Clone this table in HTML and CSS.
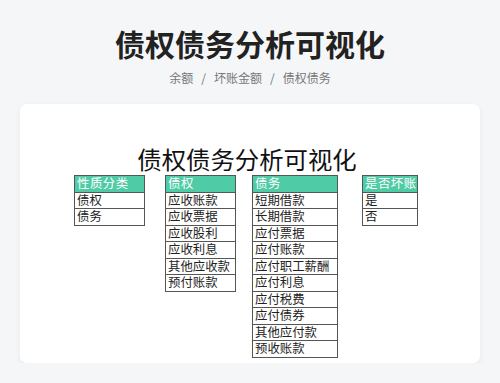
FILE: index.html
```html
<!DOCTYPE html>
<html lang="zh">
<head>
<meta charset="utf-8">
<link rel="stylesheet" href="styles.css">
</head>
<body>
<div class="page">
  <h1 class="title">债权债务分析可视化</h1>
  <div class="crumbs"><span>余额</span><span class="sep">/</span><span>坏账金额</span><span class="sep">/</span><span>债权债务</span></div>
  <div class="card">
    <div class="chart-title">债权债务分析可视化</div>
    <div class="tables">
      <table class="tbl t1">
        <tr><th>性质分类</th></tr>
        <tr><td>债权</td></tr>
        <tr><td>债务</td></tr>
      </table>
      <table class="tbl t2">
        <tr><th>债权</th></tr>
        <tr><td>应收账款</td></tr>
        <tr><td>应收票据</td></tr>
        <tr><td>应收股利</td></tr>
        <tr><td>应收利息</td></tr>
        <tr><td>其他应收款</td></tr>
        <tr><td>预付账款</td></tr>
      </table>
      <table class="tbl t3">
        <tr><th>债务</th></tr>
        <tr><td>短期借款</td></tr>
        <tr><td>长期借款</td></tr>
        <tr><td>应付票据</td></tr>
        <tr><td>应付账款</td></tr>
        <tr><td>应付职工薪酬</td></tr>
        <tr><td>应付利息</td></tr>
        <tr><td>应付税费</td></tr>
        <tr><td>应付债券</td></tr>
        <tr><td>其他应付款</td></tr>
        <tr><td>预收账款</td></tr>
      </table>
      <table class="tbl t4">
        <tr><th>是否坏账</th></tr>
        <tr><td>是</td></tr>
        <tr><td>否</td></tr>
      </table>
    </div>
  </div>
</div>
</body>
</html>
```
FILE: styles.css
```css
html, body {
  margin: 0;
  padding: 0;
  background: #f5f6f8;
  font-family: "Noto Sans CJK SC", "Noto Sans", sans-serif;
}
.page {
  padding-top: 23px;
}
.title {
  margin: 0;
  text-align: center;
  font-size: 30px;
  line-height: 40px;
  font-weight: 700;
  color: #222;
}
.crumbs {
  margin-top: 7px;
  text-align: center;
  font-size: 12px;
  line-height: 16px;
  color: #777;
}
.crumbs .sep {
  margin: 0 8px;
}
.card {
  margin: 18px 20px 0;
  height: 259px;
  background: #fff;
  border-radius: 7px;
  box-shadow: 0 2px 6px rgba(0,0,0,0.06);
  padding-top: 42px;
  box-sizing: border-box;
}
.chart-title {
  text-align: center;
  font-size: 24.4px;
  line-height: 26px;
  color: #111;
  padding-right: 6px;
}
.tables {
  display: flex;
  align-items: flex-start;
  padding-left: 54px;
  margin-top: 3px;
}
.tbl {
  border-collapse: collapse;
  font-size: 12.4px;
  color: #222;
}
.tbl th, .tbl td {
  border: 1px solid #555;
  height: 15.5px;
  padding: 0 0 0 2px;
  line-height: 15.5px;
  text-align: left;
  white-space: nowrap;
  box-sizing: border-box;
}
.tbl tr { height: 16.5px; }
.tbl th {
  background: #4fcba5;
  color: #fff;
  font-weight: 400;
  letter-spacing: 0.5px;
}
.t1 { width: 71px; margin-right: 20px; }
.t2 { width: 71px; margin-right: 16px; }
.t3 { width: 86px; margin-right: 24px; }
.t4 { width: 55px; }
```
